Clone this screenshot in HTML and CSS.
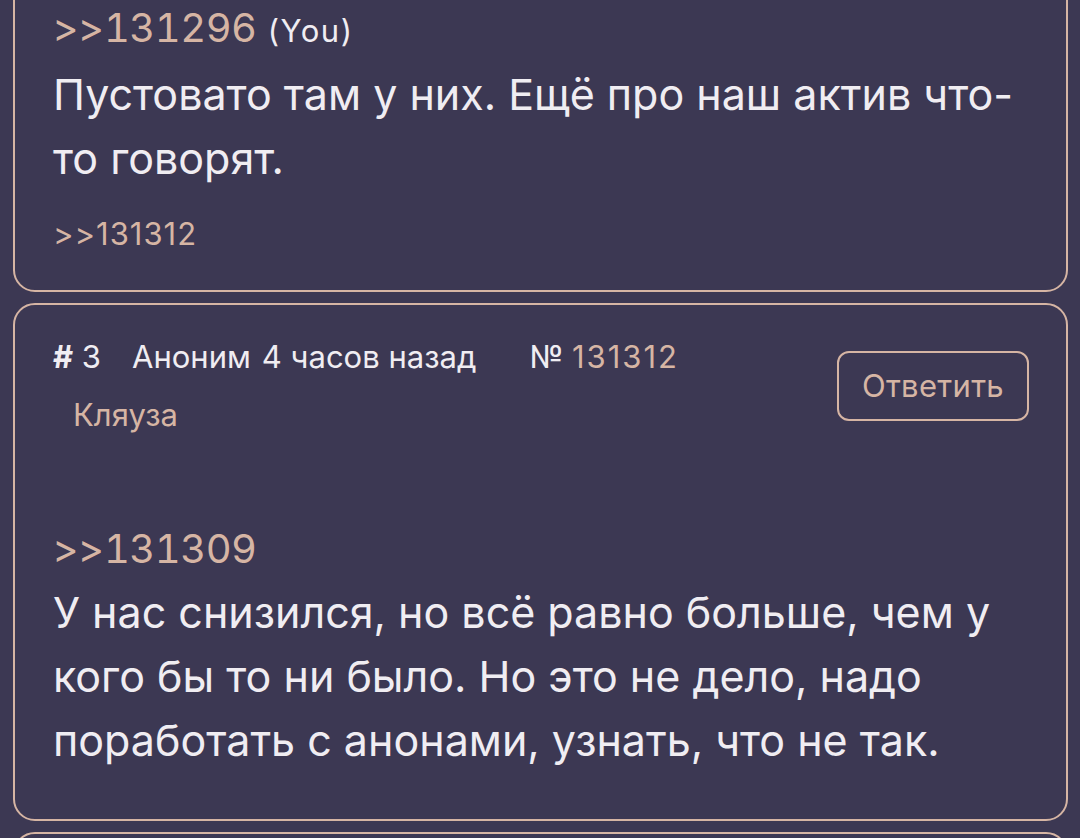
FILE: index.html
```html
<!DOCTYPE html>
<html lang="ru">
<head>
    <meta charset="UTF-8">
    <meta name="viewport" content="width=device-width, initial-scale=1.0">
    <title>Тред</title>
    <link rel="stylesheet" href="styles.css">
</head>
<body>
    <div class="thread">
        <!-- пост 2, верх обрезан -->
        <div class="post post-cut">
            <div class="post-body">
                <div class="reply-line"><a class="ref" href="#">&gt;&gt;131296</a> <span class="you">(You)</span></div>
                <p class="text">Пустовато там у них. Ещё про наш актив что-то говорят.</p>
            </div>
            <div class="answers"><a href="#">&gt;&gt;131312</a></div>
        </div>

        <div class="post">
            <div class="post-head">
                <div class="meta">
                    <div class="meta-line">
                        <span class="num"><b>#</b> 3</span>
                        <span class="author">Аноним</span>
                        <span class="time">4 часов назад</span>
                        <span class="id">№ <a href="#">131312</a></span>
                    </div>
                    <div class="tag">Кляуза</div>
                </div>
                <button class="btn-reply">Ответить</button>
            </div>
            <div class="post-body">
                <div class="reply-line"><a class="ref" href="#">&gt;&gt;131309</a></div>
                <p class="text">У нас снизился, но всё равно больше, чем у кого бы то ни было. Но это не дело, надо поработать с анонами, узнать, что не так.</p>
            </div>
        </div>

        <div class="post"></div>
    </div>
</body>
</html>
```

FILE: styles.css
```css
body {
    margin: 0;
    background-color: #3c3853;
    font-family: Inter, "Noto Sans", sans-serif;
    color: #f0edf2;
    overflow: hidden;
}
a {
    color: #d6b5a4;
    text-decoration: none;
}
.thread {
    display: flex;
    flex-direction: column;
    gap: 11px;
    padding: 0 12px 0 13px;
    margin-top: -38px;
}
.post {
    border: 2px solid #d6b5a4;
    border-radius: 22px;
    padding: 0 38px;
    min-height: 200px;
}
.post-cut {
    min-height: 0;
    padding-top: 36px;
    padding-bottom: 36px;
}
.ref {
    font-variant-numeric: tabular-nums;
    letter-spacing: -0.5px;
}
.reply-line {
    font-size: 40px;
    line-height: 56px;
}
.you {
    font-size: 31px;
    color: #f0edf2;
    letter-spacing: 1.5px;
}
.text {
    margin: 3px 0 0;
    font-size: 43px;
    line-height: 64px;
}
.answers {
    margin-top: 24px;
    font-size: 31px;
    line-height: 40px;
    letter-spacing: 1px;
}
.post-head {
    display: flex;
    justify-content: space-between;
    align-items: flex-start;
    padding-top: 32px;
}
.meta-line {
    display: flex;
    align-items: baseline;
    gap: 11px;
    font-size: 31px;
    line-height: 40px;
}
.num b {
    font-weight: 700;
}
.author {
    margin-left: 20px;
}
.id {
    margin-left: 42px;
}
.id a {
    letter-spacing: 2px;
}
.tag {
    margin: 18px 0 0 20px;
    font-size: 31px;
    line-height: 40px;
    color: #d6b5a4;
}
.btn-reply {
    margin-top: 14px;
    margin-right: -1px;
    padding: 15px 23px;
    background: none;
    border: 2px solid #d6b5a4;
    border-radius: 12px;
    color: #d6b5a4;
    font-family: inherit;
    font-size: 31px;
    line-height: 36px;
    letter-spacing: 0.3px;
}
.post-head + .post-body {
    margin-top: 86px;
    padding-bottom: 47px;
}
```
